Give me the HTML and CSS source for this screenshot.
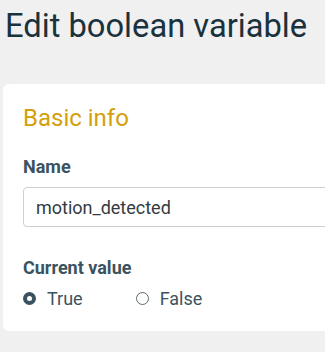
FILE: index.html
```html
<!DOCTYPE html>
<html lang="en">
<head>
    <meta charset="UTF-8">
    <meta name="viewport" content="width=device-width, initial-scale=1.0">
    <title>Edit boolean variable</title>
    <link rel="stylesheet" href="styles.css">
</head>
<body>
    <div class="page">
        <h1>Edit boolean variable</h1>

        <div class="card">
            <h2>Basic info</h2>

            <label class="field-label" for="name">Name</label>
            <input class="text-input" id="name" type="text" value="motion_detected">

            <div class="field-label spaced">Current value</div>
            <div class="radios">
                <label class="radio">
                    <input type="radio" name="value" checked>
                    <span class="dot"></span>
                    True
                </label>
                <label class="radio">
                    <input type="radio" name="value">
                    <span class="dot"></span>
                    False
                </label>
            </div>
        </div>
    </div>
</body>
</html>
```

FILE: styles.css
```css
* {
    box-sizing: border-box;
}

body {
    margin: 0;
    background: #f0f0f0;
    font-family: Roboto, "Liberation Sans", sans-serif;
    overflow: hidden;
}

.page {
    padding-left: 3px;
}

h1 {
    margin: 0;
    padding: 6px 0 0 2px;
    font-size: 32.7px;
    line-height: 40px;
    font-weight: 400;
    color: #1a323e;
}

.card {
    margin-top: 38px;
    width: 380px;
    background: #fff;
    border-radius: 6px;
    padding: 20px 20px 21px 20px;
}

.card h2 {
    margin: 0;
    font-size: 24px;
    line-height: 28px;
    font-weight: 400;
    color: #d4a00c;
}

.field-label {
    display: block;
    margin-top: 24px;
    font-size: 18px;
    line-height: 22px;
    font-weight: 700;
    color: #3b5360;
}

.field-label.spaced {
    margin-top: 30px;
}

.text-input {
    display: block;
    margin-top: 9px;
    width: 100%;
    height: 40px;
    padding: 0 12px;
    border: 1px solid #cfcfcf;
    border-radius: 4px;
    font-family: inherit;
    font-size: 18px;
    color: #333b3f;
    background: #fff;
}

.radios {
    display: flex;
    gap: 53px;
    margin-top: 7px;
    height: 24px;
    align-items: center;
}

.radio {
    display: flex;
    align-items: center;
    gap: 11px;
    font-size: 18px;
    color: #3b5360;
}

.radio input {
    display: none;
}

.dot {
    width: 13px;
    height: 13px;
    border-radius: 50%;
    border: 1px solid #5c6a70;
}

.radio input:checked + .dot {
    border: 4px solid #3b5360;
}
```
